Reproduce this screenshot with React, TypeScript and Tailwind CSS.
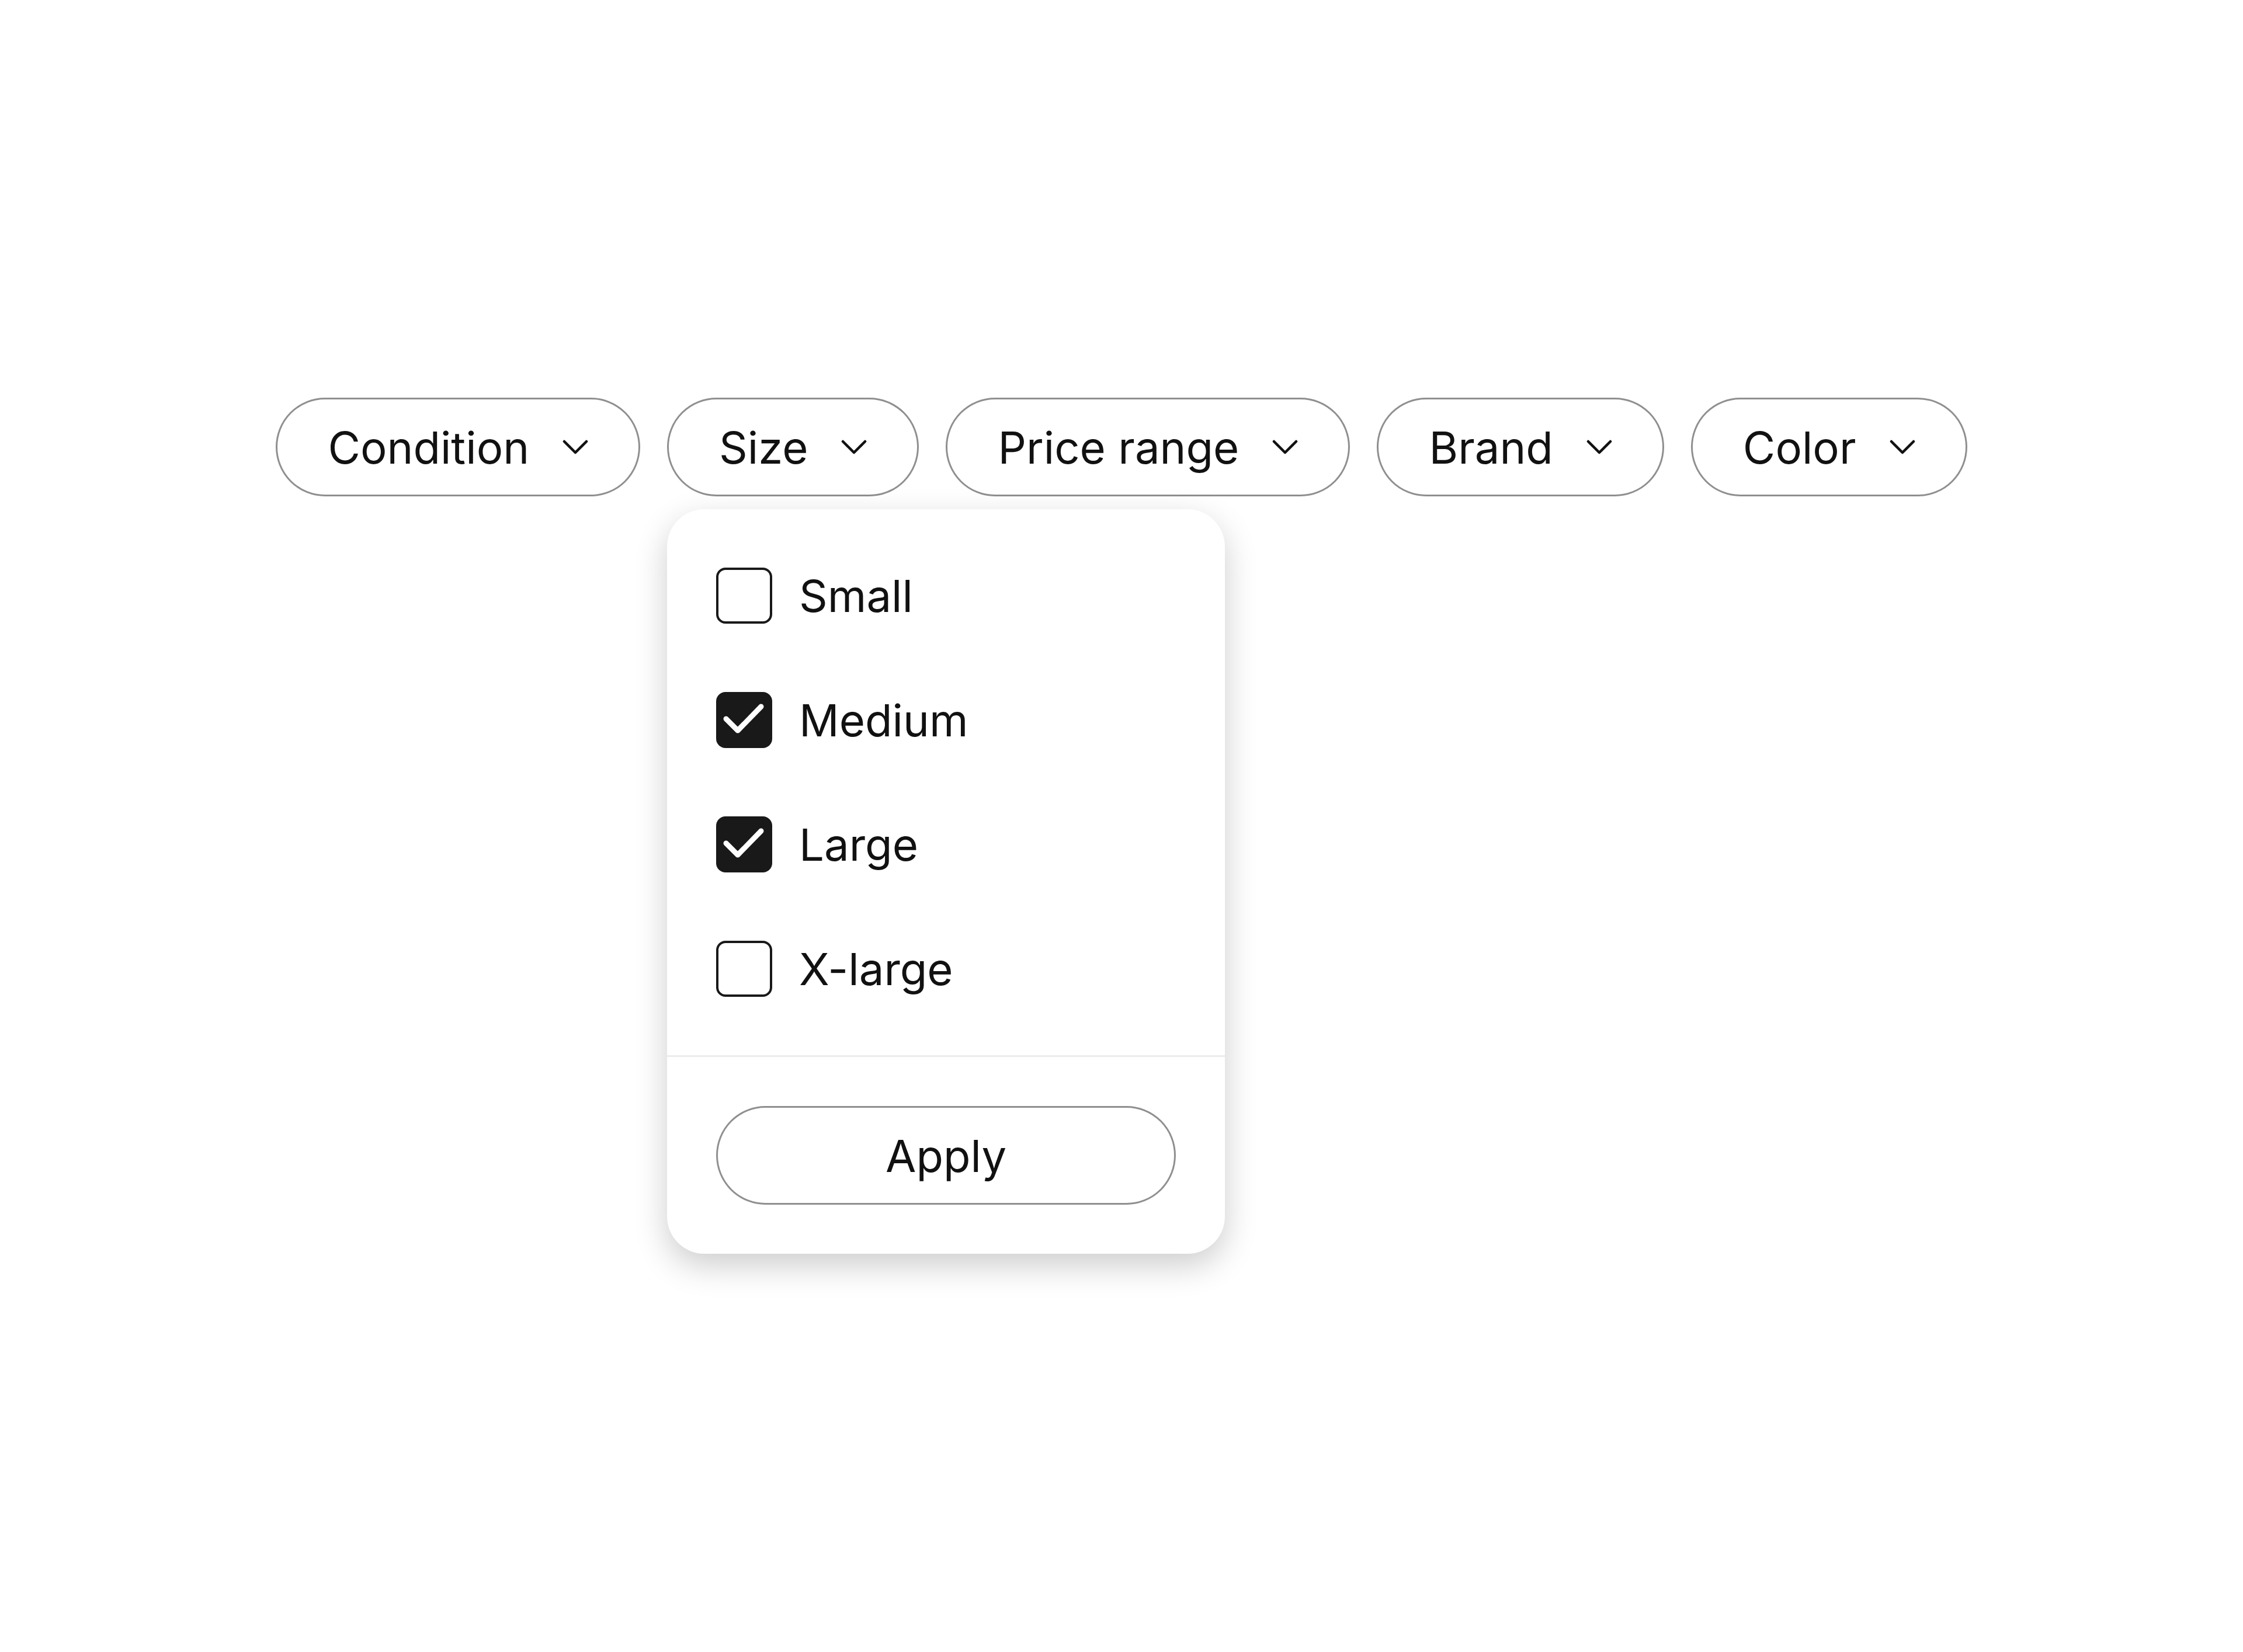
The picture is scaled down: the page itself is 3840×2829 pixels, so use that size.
import { useState } from "react";

const filters = ["Condition", "Size", "Price range", "Brand", "Color"];

const sizes = [
  { label: "Small", checked: false },
  { label: "Medium", checked: true },
  { label: "Large", checked: true },
  { label: "X-large", checked: false },
];

function Chevron() {
  return (
    <svg viewBox="0 0 44 25" className="h-[25px] w-[44px] shrink-0" fill="none">
      <path d="M3 3l19 19L41 3" stroke="#111" strokeWidth="4.5" strokeLinecap="round" strokeLinejoin="round" />
    </svg>
  );
}

function Checkbox({ checked }: { checked: boolean }) {
  if (checked) {
    return (
      <span className="flex h-[96px] w-[96px] shrink-0 items-center justify-center rounded-[16px] bg-[#191919]">
        <svg viewBox="0 0 96 96" className="h-[96px] w-[96px]" fill="none">
          <path d="M17 46l20 20L77 25" stroke="#fff" strokeWidth="9" strokeLinecap="round" strokeLinejoin="round" />
        </svg>
      </span>
    );
  }
  return <span className="h-[96px] w-[96px] shrink-0 rounded-[16px] border-[4px] border-[#191919] bg-white" />;
}

function Pill({ label }: { label: string }) {
  return (
    <button className="flex h-[169px] items-center gap-[57px] rounded-full border-[3px] border-[#8f8f8f] bg-white pl-[86px] pr-[86px] text-[76px] leading-none text-[#111]">
      <span>{label}</span>
      <Chevron />
    </button>
  );
}

function SizeMenu() {
  const [items, setItems] = useState(sizes);

  return (
    <div className="absolute left-0 top-full z-10 mt-[22px] w-[955px] overflow-hidden rounded-[64px] bg-white shadow-[0_20px_56px_rgba(0,0,0,0.2)]">
      <div className="flex flex-col gap-[117px] px-[84px] py-[100px]">
        {items.map((item, i) => (
          <label
            key={item.label}
            className="flex h-[96px] cursor-pointer items-center gap-[46px] text-[76px] leading-none text-[#111]"
            onClick={() => setItems(items.map((it, j) => (j === i ? { ...it, checked: !it.checked } : it)))}
          >
            <Checkbox checked={item.checked} />
            <span>{item.label}</span>
          </label>
        ))}
      </div>
      <div className="h-[3px] bg-[#ececec]" />
      <div className="p-[84px]">
        <button className="flex h-[169px] w-full items-center justify-center rounded-full border-[3px] border-[#8f8f8f] bg-white text-[76px] leading-none text-[#111]">
          Apply
        </button>
      </div>
    </div>
  );
}

export default function App() {
  return (
    <div className="h-[2829px] bg-white pt-[681px]" style={{ fontFamily: "Inter, 'Liberation Sans', sans-serif" }}>
      <div className="flex justify-center gap-[46px]">
        {filters.map((f) =>
          f === "Size" ? (
            <div key={f} className="relative">
              <Pill label={f} />
              <SizeMenu />
            </div>
          ) : (
            <Pill key={f} label={f} />
          )
        )}
      </div>
    </div>
  );
}
